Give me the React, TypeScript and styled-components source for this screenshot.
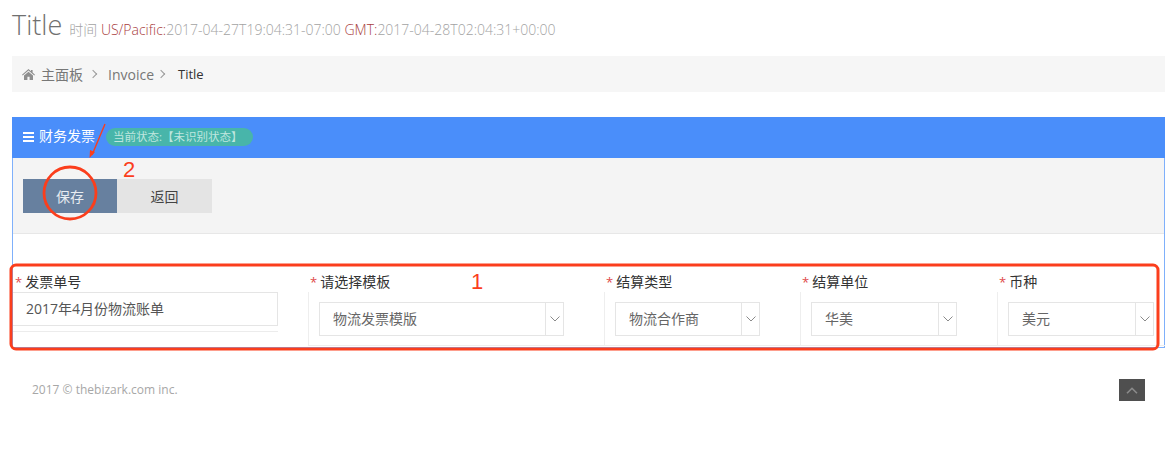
import React from 'react'
import styled, { createGlobalStyle } from 'styled-components'

const GlobalStyle = createGlobalStyle`
  html, body {
    margin: 0;
    background: #fff;
    font-family: 'Open Sans', 'Noto Sans CJK SC', sans-serif;
  }
  * { box-sizing: border-box; }
`

const fields = [
  { label: '请选择模板', value: '物流发票模版', width: 296, selectWidth: 245 },
  { label: '结算类型', value: '物流合作商', width: 196, selectWidth: 145 },
  { label: '结算单位', value: '华美', width: 197, selectWidth: 146 },
  { label: '币种', value: '美元', width: 168, selectWidth: 146 },
]

const App = () => {
  return (
    <Page>
      <GlobalStyle />
      <TitleRow>
        <PageTitle>Title</PageTitle>
        <TimeInfo>
          时间 <Zone>US/Pacific:</Zone>2017-04-27T19:04:31-07:00 <Zone>GMT:</Zone>2017-04-28T02:04:31+00:00
        </TimeInfo>
      </TitleRow>

      <Breadcrumb>
        <svg width="13" height="11" viewBox="0 0 13 11">
          <path d="M6.5 0 L9 2.2 V1 H10.6 V3.6 L13 5.8 L12.3 6.5 L6.5 1.5 L0.7 6.5 L0 5.8 Z M2 6.6 L6.5 2.8 L11 6.6 V11 H7.6 V7.8 H5.4 V11 H2 Z" fill="#8f8f8f" />
        </svg>
        <Crumb>主面板</Crumb>
        <Chevron />
        <Crumb>Invoice</Crumb>
        <Chevron />
        <CurrentCrumb>Title</CurrentCrumb>
      </Breadcrumb>

      <Panel>
        <PanelHeader>
          <Burger>
            <i />
            <i />
            <i />
          </Burger>
          <PanelTitle>财务发票</PanelTitle>
          <StatusBadge>当前状态:【未识别状态】</StatusBadge>
        </PanelHeader>
        <Toolbar>
          <SaveButton>保存</SaveButton>
          <BackButton>返回</BackButton>
        </Toolbar>
        <Spacer />
        <FieldRow>
          <InputField>
            <FieldLabel>
              <Star>*</Star>发票单号
            </FieldLabel>
            <TextInput>2017年4月份物流账单</TextInput>
          </InputField>
          {fields.map(f => (
            <SelectField key={f.label} $width={f.width}>
              <FieldLabel>
                <Star>*</Star>
                {f.label}
              </FieldLabel>
              <SelectCell>
                <SelectBox $width={f.selectWidth}>
                  <SelectValue>{f.value}</SelectValue>
                  <SelectArrow>
                    <svg width="10" height="6" viewBox="0 0 10 6">
                      <path d="M0.5 0.5 L5 5 L9.5 0.5" fill="none" stroke="#8a8a8a" strokeWidth="1" />
                    </svg>
                  </SelectArrow>
                </SelectBox>
              </SelectCell>
            </SelectField>
          ))}
        </FieldRow>
      </Panel>

      <Footer>
        <Copyright>2017 © thebizark.com inc.</Copyright>
        <ScrollTop>
          <svg width="12" height="7" viewBox="0 0 12 7">
            <path d="M1 6.3 L6 1.3 L11 6.3" fill="none" stroke="#8b8b8b" strokeWidth="1.6" />
          </svg>
        </ScrollTop>
      </Footer>

      <Annotations width="1174" height="456" viewBox="0 0 1174 456">
        <rect x="11" y="265" width="1147" height="84" rx="5" fill="none" stroke="#fb3e1c" strokeWidth="3" />
        <circle cx="70" cy="193" r="26" fill="none" stroke="#fb3e1c" strokeWidth="2.8" />
        <path d="M105 124 L92 155" fill="none" stroke="#fb3e1c" strokeWidth="1.4" />
        <path d="M89.5 158 L90 150 L95 152 Z" fill="#fb3e1c" />
        <AnnotationText x="123" y="177">2</AnnotationText>
        <AnnotationText x="471" y="289">1</AnnotationText>
      </Annotations>
    </Page>
  )
}
export default App

const Page = styled.div`
  position: relative;
  width: 1174px;
  height: 456px;
  overflow: hidden;
  padding: 0 9px 0 12px;
`

const TitleRow = styled.div`
  display: flex;
  align-items: baseline;
  height: 56px;
  padding-top: 6px;
  white-space: nowrap;
`

const PageTitle = styled.h1`
  margin: 0 7px 0 0;
  font-size: 27px;
  line-height: 38px;
  font-weight: 300;
  color: #707070;
`

const TimeInfo = styled.small`
  font-size: 14px;
  font-weight: 300;
  color: #a3a3a3;
`

const Zone = styled.span`
  color: #a83c3c;
`

const Breadcrumb = styled.div`
  display: flex;
  align-items: center;
  height: 36px;
  padding-left: 10px;
  background: #f6f6f6;
  font-size: 14px;
`

const Crumb = styled.span`
  margin-left: 6px;
  color: #777;
  &:first-of-type {
    margin-right: 3px;
  }
`

const CurrentCrumb = styled.span`
  margin-left: 8px;
  color: #333;
  font-size: 13px;
`

const Chevron = styled.span`
  width: 6px;
  height: 6px;
  margin: 0 6px 0 4px;
  border-top: 1px solid #999;
  border-right: 1px solid #999;
  transform: rotate(45deg);
`

const Panel = styled.div`
  margin-top: 25px;
  height: 231px;
  border: 1px solid #7fb0fb;
  border-top: 0;
`

const PanelHeader = styled.div`
  display: flex;
  align-items: center;
  height: 41px;
  margin: 0 -1px;
  padding: 0 0 1px 11px;
  background: #4a8efa;
`

const Burger = styled.span`
  display: flex;
  flex-direction: column;
  gap: 2px;
  width: 11px;
  margin-right: 5px;
  i {
    display: block;
    height: 2px;
    background: #fff;
  }
`

const PanelTitle = styled.span`
  position: relative;
  top: -2px;
  font-size: 14px;
  color: #fff;
`

const StatusBadge = styled.span`
  margin-left: 11px;
  height: 18px;
  padding: 0 10px 0 7px;
  border-radius: 9px;
  background: #48b5aa;
  color: #bfe6df;
  font-size: 11.5px;
  line-height: 18px;
  white-space: nowrap;
`

const Toolbar = styled.div`
  display: flex;
  height: 76px;
  padding: 21px 10px;
  background: #f4f4f4;
  border-bottom: 1px solid #e7e7e7;
`

const SaveButton = styled.button`
  width: 94px;
  height: 34px;
  border: 0;
  padding: 0;
  background: #67809f;
  color: #e8ecf1;
  font: inherit;
  font-size: 14px;
`

const BackButton = styled(SaveButton)`
  width: 95px;
  background: #e4e4e4;
  color: #444;
`

const Spacer = styled.div`
  height: 32px;
`

const FieldRow = styled.div`
  display: flex;
`

const InputField = styled.div`
  width: 295px;
  flex: none;
`

const SelectField = styled.div<{ $width: number }>`
  width: ${p => p.$width}px;
  flex: none;
`

const FieldLabel = styled.div`
  height: 26px;
  padding: 6px 0 0 2px;
  color: #333;
  font-size: 14px;
  line-height: 19px;
  white-space: nowrap;
`

const Star = styled.span`
  margin-right: 3px;
  color: #e04a4a;
  font-size: 13px;
`

const TextInput = styled.div`
  width: 265px;
  height: 34px;
  padding-left: 13px;
  border: 1px solid #e5e5e5;
  border-left: 0;
  color: #555;
  font-size: 14px;
  line-height: 32px;
  box-shadow: 0 5px 0 #fff, 0 6px 0 #ececec;
`

const SelectCell = styled.div`
  height: 54px;
  padding: 10px 0 0 10px;
  border-left: 1px solid #eee;
  border-bottom: 1px solid #eee;
`

const SelectBox = styled.div<{ $width: number }>`
  display: flex;
  width: ${p => p.$width}px;
  height: 34px;
  background: #fff;
  border: 1px solid #e5e5e5;
`

const SelectValue = styled.span`
  flex: 1;
  padding-left: 13px;
  color: #666;
  font-size: 14px;
  line-height: 32px;
`

const SelectArrow = styled.span`
  display: flex;
  align-items: center;
  justify-content: center;
  width: 18px;
  border-left: 1px solid #e5e5e5;
`

const Footer = styled.div`
  display: flex;
  align-items: center;
  justify-content: space-between;
  margin-top: 31px;
  padding: 0 20px;
`

const Copyright = styled.span`
  padding-bottom: 2px;
  color: #a7a7a7;
  font-size: 12px;
`

const ScrollTop = styled.span`
  display: flex;
  align-items: center;
  justify-content: center;
  width: 26px;
  height: 22px;
  background: #4f4f4f;
`

const Annotations = styled.svg`
  position: absolute;
  left: 0;
  top: 0;
  pointer-events: none;
`

const AnnotationText = styled.text`
  font-family: 'Liberation Sans', sans-serif;
  font-size: 22px;
  fill: #fb3e1c;
`
